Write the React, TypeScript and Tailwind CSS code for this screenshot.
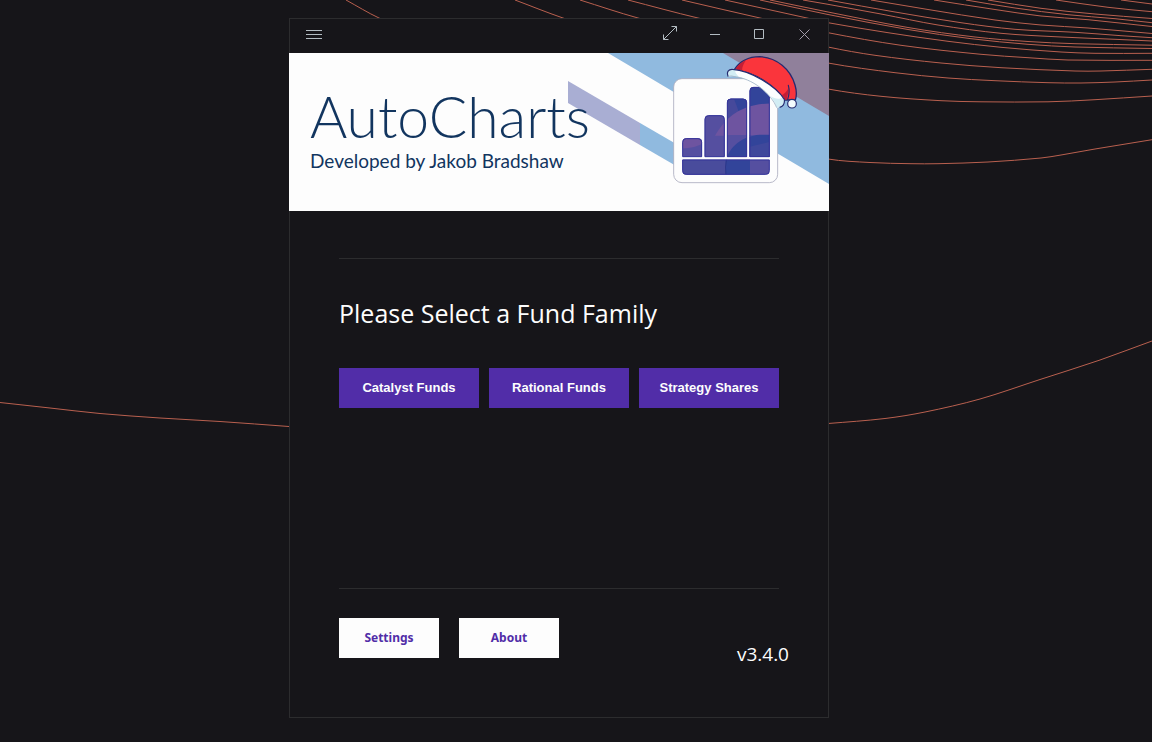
type Point = [number, number];

const contours: Point[][] = [
  [[-10, 401], [0, 402.5], [50, 408], [100, 413.5], [160, 418], [220, 421.5], [289, 426.5], [420, 436], [600, 437], [740, 430], [828, 423.5], [885, 418.5], [925, 412], [980, 399], [1040, 379.5], [1100, 360], [1152, 341], [1170, 335]],
  [[346, 0], [379, 18], [600, 118], [828, 159], [870, 162.5], [911, 163.7], [938, 163.7], [988, 162], [1041, 158], [1061, 155], [1095, 149], [1152, 139.7], [1170, 137]],
  [[515, 0], [563, 18], [700, 63], [828, 89], [881, 96.3], [941, 100.7], [981, 101.8], [1048, 101.8], [1095, 99.7], [1152, 96], [1170, 95]],
  [[580, 0], [638, 18], [740, 44], [828, 63], [895, 72.7], [948, 78], [995, 80.7], [1048, 82.7], [1081, 83], [1115, 82], [1152, 80], [1170, 79]],
  [[628, 0], [698, 18], [828, 47], [875, 55.3], [941, 63], [1001, 67.7], [1075, 71], [1101, 71], [1152, 69.3], [1170, 69]],
  [[682, 0], [760, 18], [828, 32.7], [901, 45.3], [981, 54.3], [1028, 57.7], [1068, 60], [1152, 60.3], [1170, 60]],
  [[725, 0], [807, 18], [828, 22.7], [888, 32.7], [948, 41.3], [1001, 47.3], [1061, 52], [1095, 53.3], [1152, 53.3], [1170, 53]],
  [[760, 0], [828, 14.5], [908, 29.5], [971, 38.7], [1028, 44.3], [1075, 47], [1152, 48.5], [1170, 49]],
  [[770, 0], [828, 12], [908, 27.5], [975, 37], [1028, 41.5], [1075, 43.7], [1152, 45.2], [1170, 46]],
  [[803, 0], [828, 4.3], [881, 14], [938, 25], [1001, 33.3], [1061, 37], [1115, 39.3], [1152, 41], [1170, 42]],
  [[828, 0], [895, 12], [961, 22.7], [1015, 29.3], [1075, 32.3], [1121, 35.7], [1152, 37.7], [1170, 39]],
  [[871, 0], [928, 9.5], [995, 20], [1041, 25], [1088, 28], [1152, 33.5], [1170, 35]],
  [[934, 0], [995, 9.5], [1041, 16], [1088, 19.7], [1152, 26.5], [1170, 28]],
  [[966, 0], [1015, 8], [1068, 14.7], [1115, 18.7], [1152, 22.7], [1170, 24]],
  [[988, 0], [1041, 8.3], [1095, 14], [1152, 18.5], [1170, 20]],
  [[1056, 0], [1108, 7.3], [1152, 11.7], [1170, 13]],
  [[1121, 0], [1152, 4], [1170, 6]],
];

// Catmull-Rom spline through the points, written as cubic Béziers.
function smooth(points: Point[]): string {
  let d = `M${points[0][0]} ${points[0][1]}`;
  for (let i = 0; i < points.length - 1; i++) {
    const a = points[Math.max(i - 1, 0)];
    const b = points[i];
    const c = points[i + 1];
    const e = points[Math.min(i + 2, points.length - 1)];
    const t = (c[0] - b[0]) / 3;
    const m1 = (c[1] - a[1]) / (c[0] - a[0]);
    const m2 = (e[1] - b[1]) / (e[0] - b[0]);
    d += `C${b[0] + t} ${b[1] + m1 * t} ${c[0] - t} ${c[1] - m2 * t} ${c[0]} ${c[1]}`;
  }
  return d;
}

function Backdrop() {
  return (
    <svg
      className="absolute inset-0 h-full w-full"
      viewBox="0 0 1152 742"
      preserveAspectRatio="xMidYMin slice"
      fill="none"
      stroke="#b9604f"
      strokeWidth="1"
      aria-hidden="true"
    >
      {contours.map((points, i) => (
        <path key={i} d={smooth(points)} />
      ))}
    </svg>
  );
}

function BannerArt() {
  return (
    <svg
      className="absolute top-0 right-0 h-full"
      viewBox="568 53 261 158"
      aria-hidden="true"
    >
      <defs>
        <clipPath id="bars">
          <path d="M67 320V277Q67 265 79 265H114Q126 265 126 277V320Z" />
          <path d="M134 320V208Q134 196 146 196H182Q194 196 194 208V320Z" />
          <path d="M201 320V158Q201 146 213 146H249Q261 146 261 158V320Z" />
          <path d="M269 320V123Q269 111 281 111H317Q329 111 329 123V320Z" />
          <path d="M67 329H329V362Q329 374 317 374H79Q67 374 67 362Z" />
        </clipPath>
      </defs>
      <path d="M608 53H829V184Z" fill="#90badf" />
      <path d="M723 53H829V116Z" fill="#90809b" />
      <path d="M568 81L640 123V145L568 103Z" fill="#a9aed3" />
      <path d="M640 123L690 152V174L640 145Z" fill="#90badf" />
      <g transform="translate(660 50) scale(.33333)">
        <rect x="41" y="86" width="312" height="312" rx="25" fill="#fdfdfd" stroke="#a9abbd" strokeWidth="2.5" />
        <g clipPath="url(#bars)">
          <rect x="60" y="100" width="280" height="280" fill="#554fa0" />
          <rect x="201" y="100" width="140" height="225" fill="#32449a" />
          <path d="M201 146H222L240 195L201 225Z" fill="#46499b" />
          <path d="M165 257C195 205 240 160 340 160V257Z" fill="#6e54a0" />
          <path d="M200 255H340V325H200Z" fill="#554fa0" />
          <path d="M200 325C210 290 245 258 300 254H340V325Z" fill="#32449a" />
          <path d="M269 290L329 276V325H269Z" fill="#3f489b" />
          <path d="M60 260H130V280Q105 295 60 296Z" fill="#6e54a0" />
          <rect x="60" y="327" width="136" height="50" fill="#494c9c" />
          <rect x="196" y="327" width="74" height="50" fill="#32449a" />
          <path d="M200 327Q194 350 198 376" fill="none" stroke="#283283" strokeWidth="2" />
        </g>
        <g fill="none" stroke="#34349a" strokeWidth="3">
          <path d="M68 320V277Q68 266 79 266H114Q125 266 125 277V320Z" />
          <path d="M135 320V208Q135 197 146 197H182Q193 197 193 208V320Z" />
          <path d="M202 320V158Q202 147 213 147H249Q260 147 260 158V320Z" />
          <path d="M270 320V123Q270 112 281 112H317Q328 112 328 123V320Z" />
          <path d="M68 330H328V362Q328 373 317 373H79Q68 373 68 362Z" />
        </g>
        <path
          d="M222 60C240 32 268 20 300 20C350 22 392 58 405 105C411 125 410 138 406 150L386 150L371 150C350 110 290 68 222 60Z"
          fill="#fa353c"
          stroke="#252b70"
          strokeWidth="4"
          strokeLinejoin="round"
        />
        <path d="M227 57C236 43 246 35 258 30C252 40 246 50 246 62Z" fill="#c41f36" />
        <path d="M386 112C386 126 382 138 380 149H372L362 137C374 132 382 124 386 112Z" fill="#c41f36" />
        <path d="M385 106C389 120 387 136 383 148" fill="none" stroke="#252b70" strokeWidth="3.5" strokeLinecap="round" />
        <path
          d="M205 80C198 66 206 57 218 58C270 61 348 108 373 148C375 163 366 172 350 173C334 132 278 84 219 79C213 78 208 79 205 80Z"
          fill="#fcfeff"
        />
        <path d="M205 80C198 66 206 57 218 58L228 60C222 66 230 72 236 80C224 77 212 77 205 80Z" fill="#d2edf4" />
        <path d="M350 173C347 160 340 150 332 139C344 146 356 150 369 142L373 148C375 163 366 172 350 173Z" fill="#d2edf4" />
        <path
          d="M205 80C198 66 206 57 218 58C270 61 348 108 373 148C375 163 366 170 359 172"
          fill="none"
          stroke="#252b70"
          strokeWidth="3.5"
        />
        <path d="M205 80C212 77 216 78 219 79C278 84 334 132 350 173" fill="none" stroke="#9fb3c6" strokeWidth="2.5" />
        <circle cx="396" cy="161" r="13" fill="#f3fbfd" stroke="#252b70" strokeWidth="3.5" />
      </g>
    </svg>
  );
}

const windowControls = [
  { label: "Expand", path: "M1.5 13.5L14.5 .5M9.5 .5H14.5V5.5M1.5 8.5V13.5H6.5", color: "text-[#b3bcc2]" },
  { label: "Minimize", path: "M3 8.5H13", color: "text-[#b3bcc2]" },
  { label: "Maximize", path: "M2.5 3.5H11.5V12.5H2.5Z", color: "text-[#b3bcc2]" },
  { label: "Close", path: "M2.5 3.5L12.5 13.5M12.5 3.5L2.5 13.5", color: "text-[#a39dab]" },
];

function TitleBar() {
  return (
    <header className="flex h-[34px] items-center justify-between pr-px pb-1 pl-4">
      <button type="button" aria-label="Menu" className="text-[#b3bcc2]">
        <svg width="16" height="10" viewBox="0 0 16 10" stroke="currentColor" aria-hidden="true">
          <path d="M0 1.5H16M0 5.5H16M0 9.5H16" />
        </svg>
      </button>
      <div className="flex">
        {windowControls.map(({ label, path, color }) => (
          <button key={label} type="button" aria-label={label} className={`flex w-[45px] justify-center ${color}`}>
            <svg width="15" height="16" viewBox="0 0 15 16" fill="none" stroke="currentColor" aria-hidden="true">
              <path d={path} />
            </svg>
          </button>
        ))}
      </div>
    </header>
  );
}

const families = ["Catalyst Funds", "Rational Funds", "Strategy Shares"];

export default function App() {
  return (
    <div className="relative flex min-h-screen justify-center bg-[#161519] pt-[18px] pr-[34px] pb-6 font-['Open_Sans',sans-serif] text-[#fdfdfd]">
      <Backdrop />
      <main className="relative flex w-full max-w-[540px] flex-col border border-[#2c2c2e] bg-[#161519]">
        <TitleBar />
        <div className="relative -mx-px h-[158px] overflow-hidden bg-[#fdfdfd] pt-[30px] pl-[21px] font-['Lato',sans-serif] text-[#12355f]">
          <BannerArt />
          <h1 className="relative text-[57px] leading-[66px] font-light">AutoCharts</h1>
          <p className="relative text-[19px] leading-6">Developed by Jakob Bradshaw</p>
        </div>
        <section className="flex flex-1 flex-col px-[49px] pt-[47px]">
          <hr className="border-[#2c2c2e]" />
          <h2 className="mt-9 text-[25px] leading-9">Please Select a Fund Family</h2>
          <div className="mt-[37px] mb-8 grid grid-cols-3 gap-[10px]">
            {families.map((name) => (
              <button
                key={name}
                type="button"
                className="h-10 bg-[#512da8] font-['Liberation_Sans',sans-serif] text-[13px] font-bold"
              >
                {name}
              </button>
            ))}
          </div>
          <hr className="mt-auto border-[#2c2c2e]" />
        </section>
        <footer className="flex items-start gap-5 pt-[29px] pr-[39px] pb-[59px] pl-[49px]">
          <button type="button" className="h-10 w-[100px] bg-[#fdfdfd] font-['Noto_Sans',sans-serif] text-[12px] font-bold text-[#512da8]">
            Settings
          </button>
          <button type="button" className="h-10 w-[100px] bg-[#fdfdfd] font-['Noto_Sans',sans-serif] text-[12px] font-bold text-[#512da8]">
            About
          </button>
          <p className="mt-6 ml-auto h-4 text-[19px] leading-6">v3.4.0</p>
        </footer>
      </main>
    </div>
  );
}
